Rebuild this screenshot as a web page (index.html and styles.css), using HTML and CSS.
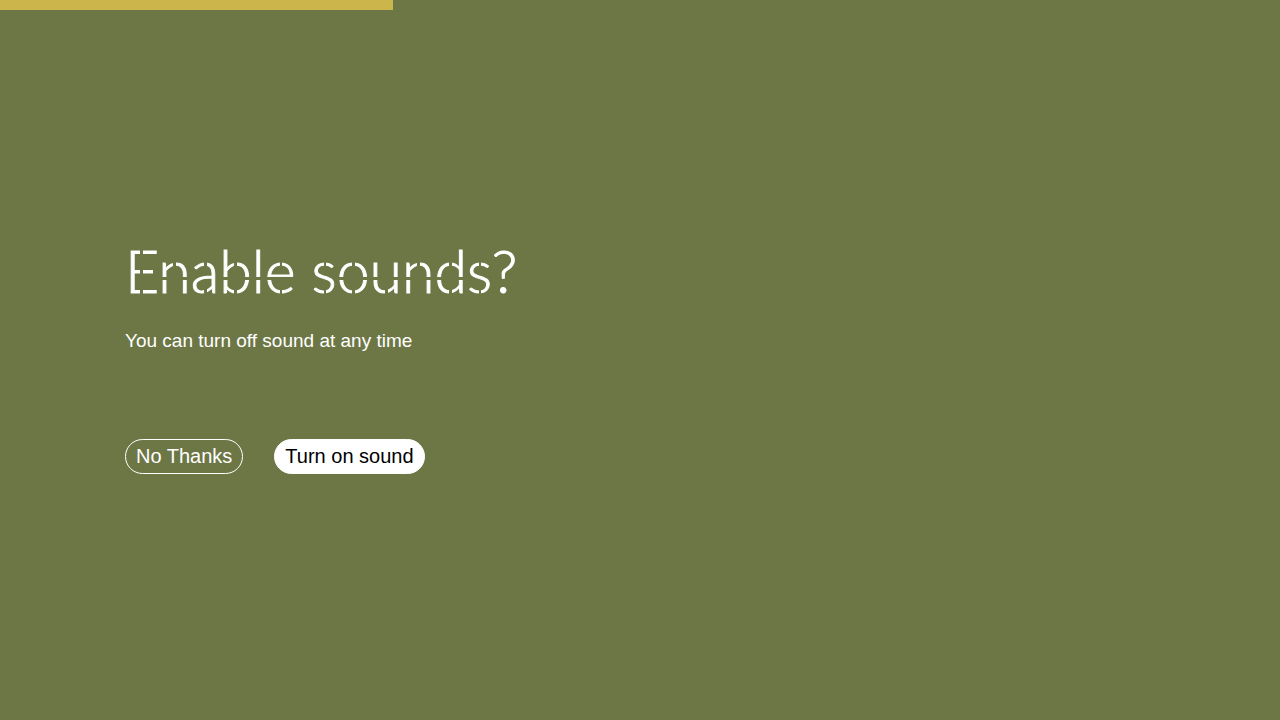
FILE: index.html
```html
<!DOCTYPE html>
<html lang="en">
<head>
  <meta charset="UTF-8" />
  <meta name="viewport" content="width=device-width, initial-scale=1.0"/>
  <title>Enable sounds?</title>
  <link rel="stylesheet" href="styles.css">
</head>
<body>
  <div class="progress"></div>
  <main class="prompt">
    <h1><span class="cut-stem">E</span><span class="cut-waist">n</span><span class="cut-bowl">a</span><span class="cut-waist">b</span><span class="cut-waist cut-plain">l</span><span class="cut-waist">e</span> <span class="cut-bowl">s</span><span class="cut-waist">o</span><span class="cut-waist">u</span><span class="cut-waist">n</span><span class="cut-waist">d</span><span class="cut-bowl">s</span>?</h1>
    <p>You can turn off sound at any time</p>
    <div class="actions">
      <button type="button">No Thanks</button>
      <button type="button" class="primary">Turn on sound</button>
    </div>
  </main>
</body>
</html>
```

FILE: styles.css
```css
*, *::before, *::after {
  box-sizing: border-box;
}

body {
  margin: 0;
  min-height: 100vh;
  display: flex;
  flex-direction: column;
  background-color: #6d7746;
  color: #ffffff;
  font-family: "Liberation Sans", Arial, sans-serif;
  font-size: 20px;
}

.progress {
  width: 30.7%;
  height: 10px;
  background-color: #ccb64b;
}

.prompt {
  flex: 1;
  display: flex;
  flex-direction: column;
  justify-content: center;
  padding: 0 125px 22px;
}

h1 {
  margin: 0;
  font-family: Lato, sans-serif;
  font-size: 59px;
  font-weight: 300;
  line-height: 72px;
  -webkit-text-stroke: 1px #ffffff;
}

/* stencil cuts through the heading letters */
h1 span {
  --split: linear-gradient(90deg, #fff calc(50% - 1px), transparent calc(50% - 1px) calc(50% + 2px), #fff calc(50% + 2px));
  --solid: linear-gradient(#fff, #fff);
  color: transparent;
  -webkit-text-stroke-color: transparent;
  background-repeat: no-repeat;
  -webkit-background-clip: text;
  background-clip: text;
}

.cut-stem {
  background-image: var(--split);
}

.cut-waist {
  background-image: var(--split), var(--solid), var(--split);
  background-position: 0 0, 0 34px, 0 45px;
  background-size: 100% 34px, 100% 8px, 100% 30px;
}

.cut-bowl {
  background-image: var(--split), var(--solid), var(--split);
  background-position: 0 0, 0 34px, 0 52px;
  background-size: 100% 34px, 100% 18px, 100% 22px;
}

h1 .cut-plain {
  --split: var(--solid);
}

p {
  margin: 20px 0 84px;
  font-size: 19px;
  line-height: 28px;
}

.actions {
  display: flex;
  gap: 31px;
}

button {
  height: 35px;
  padding: 0 10px;
  border: 1px solid #ffffff;
  border-radius: 18px;
  background-color: transparent;
  color: #ffffff;
  font: inherit;
  cursor: pointer;
}

.primary {
  background-color: #ffffff;
  color: #000000;
}
```
